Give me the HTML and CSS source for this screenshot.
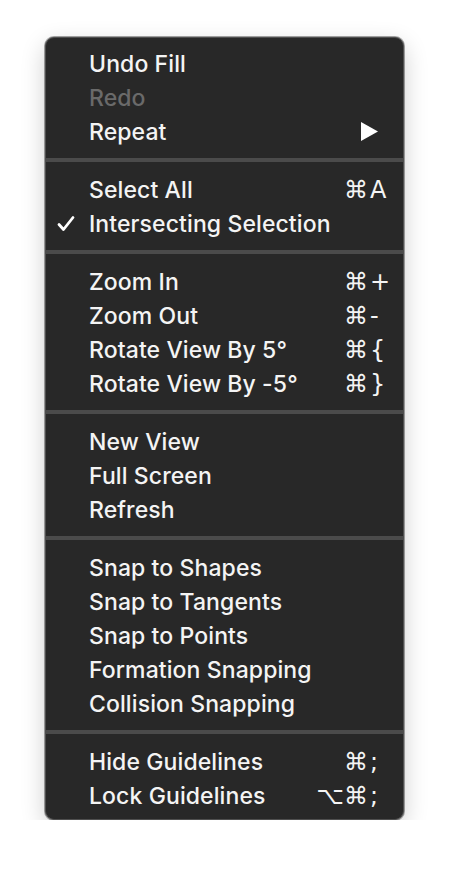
FILE: index.html
```html
<!DOCTYPE html>
<html lang="en">
<head>
<meta charset="utf-8">
<title>Menu</title>
<link rel="stylesheet" href="styles.css">
</head>
<body>
<div class="menu">
  <div class="item"><span class="label">Undo Fill</span></div>
  <div class="item disabled"><span class="label">Redo</span></div>
  <div class="item"><span class="label">Repeat</span>
    <svg class="submenu" width="18" height="20" viewBox="0 0 18 20"><path d="M0 0 L17 9.5 L0 19 Z" fill="#fff"/></svg>
  </div>
  <div class="sep"></div>
  <div class="item"><span class="label">Select All</span><span class="sc"><span class="mod">⌘</span><span class="key">A</span></span></div>
  <div class="item"><svg class="check" width="18" height="18" viewBox="0 0 18 18"><path d="M2 9.5 L6.5 14.5 L16 2.5" fill="none" stroke="#fff" stroke-width="2.8" stroke-linecap="round" stroke-linejoin="round"/></svg><span class="label">Intersecting Selection</span></div>
  <div class="sep"></div>
  <div class="item"><span class="label">Zoom In</span><span class="sc"><span class="mod">⌘</span><span class="key">+</span></span></div>
  <div class="item"><span class="label">Zoom Out</span><span class="sc"><span class="mod">⌘</span><span class="key">-</span></span></div>
  <div class="item"><span class="label">Rotate View By 5°</span><span class="sc"><span class="mod">⌘</span><span class="key">{</span></span></div>
  <div class="item"><span class="label">Rotate View By -5°</span><span class="sc"><span class="mod">⌘</span><span class="key">}</span></span></div>
  <div class="sep"></div>
  <div class="item"><span class="label">New View</span></div>
  <div class="item"><span class="label">Full Screen</span></div>
  <div class="item"><span class="label">Refresh</span></div>
  <div class="sep"></div>
  <div class="item"><span class="label">Snap to Shapes</span></div>
  <div class="item"><span class="label">Snap to Tangents</span></div>
  <div class="item"><span class="label">Snap to Points</span></div>
  <div class="item"><span class="label">Formation Snapping</span></div>
  <div class="item"><span class="label">Collision Snapping</span></div>
  <div class="sep"></div>
  <div class="item"><span class="label">Hide Guidelines</span><span class="sc"><span class="mod">⌘</span><span class="key">;</span></span></div>
  <div class="item"><span class="label">Lock Guidelines</span><span class="sc"><span class="mod">⌥⌘</span><span class="key">;</span></span></div>
</div>
</body>
</html>
```

FILE: styles.css
```css
html, body {
  margin: 0;
  padding: 0;
  background: #ffffff;
}

body {
  padding: 37px 0 0 45px;
  font-family: Inter, "Noto Sans", "DejaVu Sans", sans-serif;
}

.menu {
  width: 357px;
  box-sizing: content-box;
  background: #282828;
  border: 1px solid #4f4f4f;
  border-radius: 9px;
  padding: 9px 0 6px;
  box-shadow: 0 0 0 1px rgba(0,0,0,0.35), 0 8px 24px rgba(0,0,0,0.2);
}

.item {
  position: relative;
  height: 34px;
  display: flex;
  align-items: center;
  padding-left: 43px;
  padding-right: 17px;
  color: #f4f4f4;
  font-size: 23px;
  font-weight: 500;
  letter-spacing: 0.1px;
}

.item.disabled {
  color: #6a6a6a;
}

.label {
  flex: 1;
  white-space: nowrap;
}

.check {
  position: absolute;
  left: 11px;
  top: 8px;
}

.submenu {
  margin-right: 7px;
}

.sc {
  display: flex;
  align-items: center;
  font-family: "DejaVu Sans", sans-serif;
  font-size: 24px;
}

.mod {
  text-align: right;
}

.key {
  width: 16px;
  padding-left: 2px;
  text-align: left;
}

.sep {
  height: 4px;
  background: #4b4b4b;
  margin: 9px 0 11px;
}
```
